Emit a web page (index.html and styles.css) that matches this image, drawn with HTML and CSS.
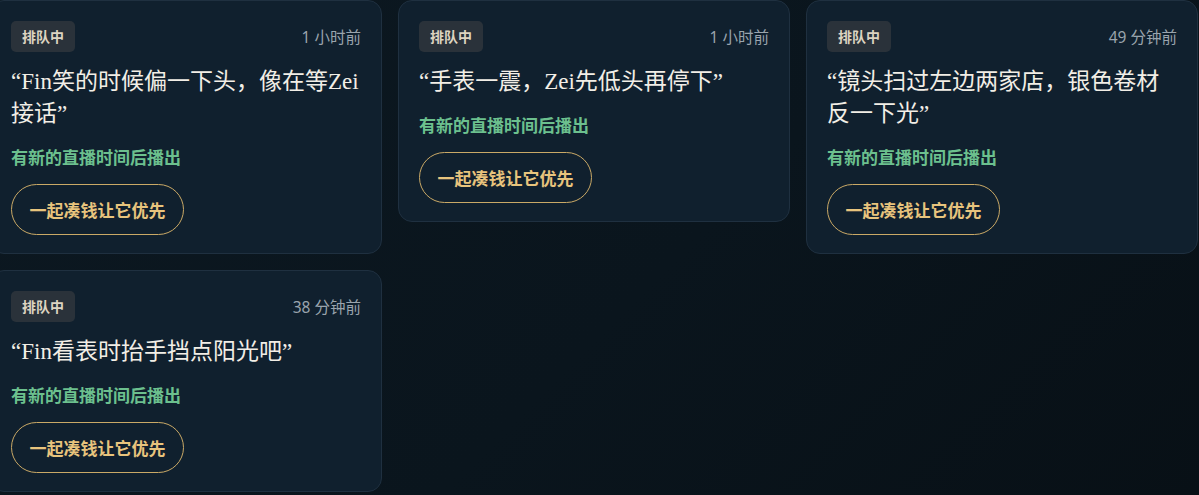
FILE: index.html
```html
<!DOCTYPE html>
<html lang="zh-CN">
<head>
<meta charset="utf-8">
<title>排队中</title>
<link rel="stylesheet" href="styles.css">
</head>
<body>
<div class="grid">
  <div class="card">
    <div class="head"><span class="badge">排队中</span><span class="time">1 小时前</span></div>
    <div class="quote">“Fin笑的时候偏一下头，像在等Zei接话”</div>
    <div class="note">有新的直播时间后播出</div>
    <button class="btn">一起凑钱让它优先</button>
  </div>
  <div class="card">
    <div class="head"><span class="badge">排队中</span><span class="time">1 小时前</span></div>
    <div class="quote">“手表一震，Zei先低头再停下”</div>
    <div class="note">有新的直播时间后播出</div>
    <button class="btn">一起凑钱让它优先</button>
  </div>
  <div class="card">
    <div class="head"><span class="badge">排队中</span><span class="time">49 分钟前</span></div>
    <div class="quote">“镜头扫过左边两家店，银色卷材反一下光”</div>
    <div class="note">有新的直播时间后播出</div>
    <button class="btn">一起凑钱让它优先</button>
  </div>
  <div class="card">
    <div class="head"><span class="badge">排队中</span><span class="time">38 分钟前</span></div>
    <div class="quote">“Fin看表时抬手挡点阳光吧”</div>
    <div class="note">有新的直播时间后播出</div>
    <button class="btn">一起凑钱让它优先</button>
  </div>
</div>
</body>
</html>
```

FILE: styles.css
```css
html, body {
  margin: 0;
  padding: 0;
  height: 100%;
}
body {
  background: linear-gradient(135deg, #0c1821 0%, #0a151d 55%, #081016 100%);
  font-family: "Noto Sans CJK SC", "Noto Sans", sans-serif;
  overflow: hidden;
}
.grid {
  display: grid;
  grid-template-columns: repeat(3, 392px);
  gap: 16px;
  align-items: start;
  width: 1208px;
  margin-left: -10px;
}
.card {
  background: #10202e;
  border: 1px solid #1f3040;
  border-radius: 14px;
  padding: 20px 20px 18px;
  display: flex;
  flex-direction: column;
  align-items: flex-start;
}
.head {
  display: flex;
  justify-content: space-between;
  align-items: center;
  align-self: stretch;
  margin-bottom: 14px;
}
.badge {
  background: #2a323a;
  color: #ddd4c1;
  font-size: 14px;
  font-weight: 700;
  line-height: 21px;
  padding: 5px 11px;
  border-radius: 5px;
}
.time {
  color: #9aa4ad;
  font-size: 15.5px;
  font-family: "Noto Sans", "Noto Sans CJK SC", sans-serif;
}
.quote {
  color: #f2eee6;
  font-family: "Liberation Serif", "Noto Sans CJK SC", serif;
  font-size: 23px;
  line-height: 32px;
  margin-bottom: 15px;
}
.note {
  color: #6cc08e;
  font-size: 17px;
  font-weight: 700;
  line-height: 24px;
  margin-bottom: 15px;
}
.btn {
  background: transparent;
  border: 1.5px solid #caa966;
  border-radius: 999px;
  color: #e8c47d;
  font-family: "Noto Sans CJK SC", sans-serif;
  font-size: 17px;
  font-weight: 700;
  line-height: 24px;
  padding: 12.5px 17.5px;
  cursor: pointer;
}
```
